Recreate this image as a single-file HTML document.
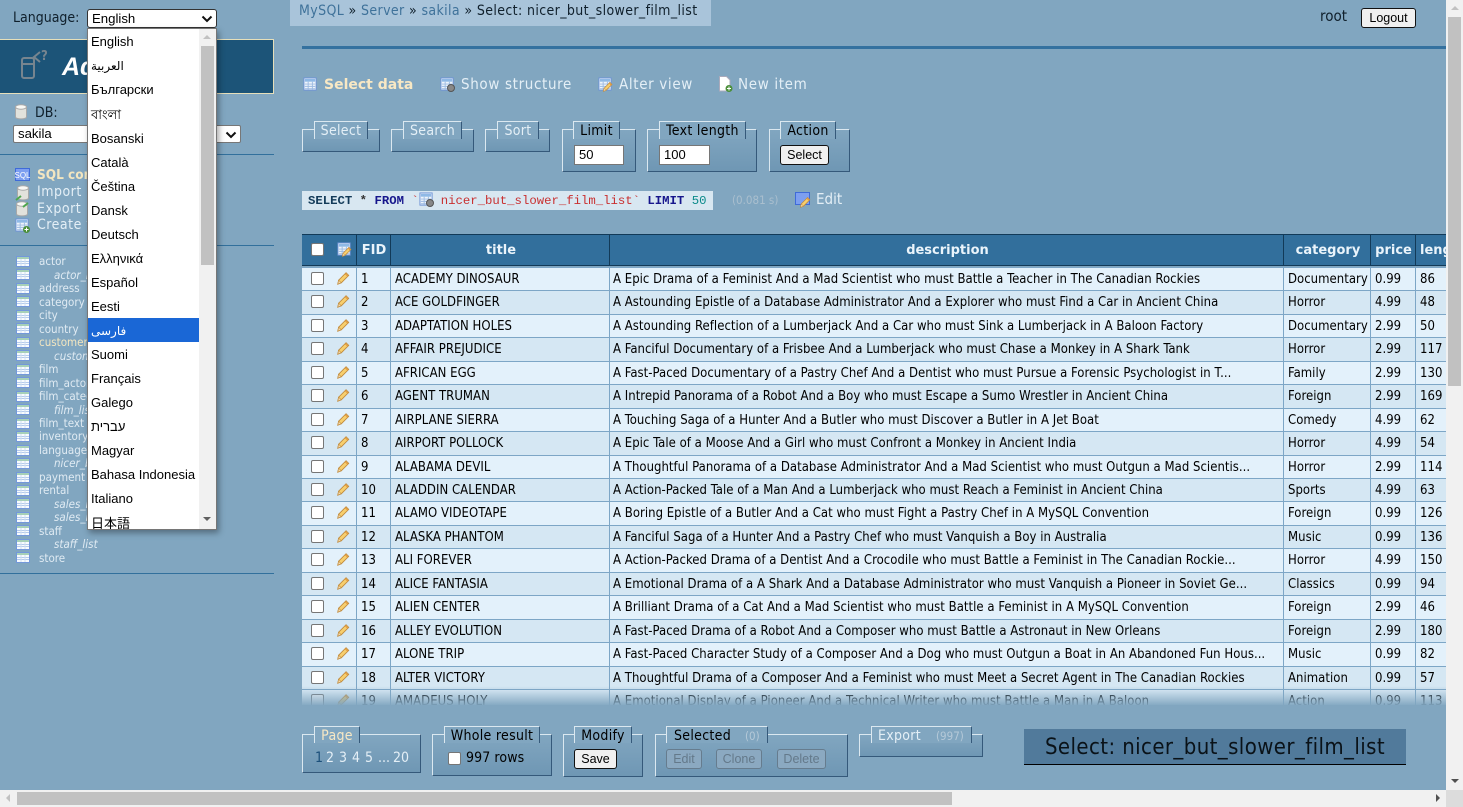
<!DOCTYPE html>
<html lang="en"><head><meta charset="utf-8"><title>Select: nicer_but_slower_film_list</title>
<style>
html,body{margin:0;padding:0;width:1463px;height:807px;overflow:hidden;background:#81a6c0;font-family:"DejaVu Sans Condensed","DejaVu Sans",sans-serif;font-stretch:condensed;font-size:13px;color:#000}
.a{position:absolute;white-space:nowrap}
.lt{color:#e4eff6}
.fs{position:absolute;box-sizing:border-box;border:1px solid;border-color:#dbe8f0 #35597a #35597a #dbe8f0;background:linear-gradient(#81a6c0,#6f97b4)}
.lg{position:absolute;box-sizing:border-box;border-top:1px solid #dbe8f0;border-left:1px solid #dbe8f0;border-right:1px solid #35597a;background:#81a6c0;text-align:center;font-size:14px;letter-spacing:.3px;line-height:19px;white-space:nowrap}
.inp{position:absolute;box-sizing:border-box;background:#fff;border:1px solid #767676;font-family:"Liberation Sans",sans-serif;font-stretch:normal;font-size:13px;line-height:18px;padding-left:4px;height:20px}
.btn{position:absolute;box-sizing:border-box;background:#f0f0f0;border:1px solid #111;border-radius:3px;text-align:center;font-family:"Liberation Sans",sans-serif;font-stretch:normal;font-size:12.5px;line-height:18px;height:20px}
.btn.dis{background:#8ba9c1;border-color:#667c8e;color:#64798a}
.cb{position:absolute;box-sizing:border-box;width:13px;height:13px;background:#fff;border:1px solid #767676;border-radius:2px}
.hr{position:absolute;left:0;width:274px;height:1px;background:#32709c}
.tb{position:absolute;left:16px;width:14px;height:11px}
.sn{position:absolute;left:39px;font-size:11.5px;line-height:13px;color:#e0ebf3;white-space:nowrap}
.sn.v{left:54px;font-style:italic}
.nv{font-size:15px;letter-spacing:.65px;line-height:18px}
.sd{left:37px;font-size:14px;letter-spacing:.5px;line-height:16px}
.pg{top:750px;font-size:14px;line-height:17px}
#tw{position:absolute;left:302px;top:234px;width:1144px;height:471px;overflow:hidden}
.th{position:absolute;top:0;left:0;width:1200px;height:32px;background:#326f9c;border-top:1px solid #123a58;border-bottom:1px solid #123a58;box-sizing:border-box}
.th b{position:absolute;top:0;height:30px;line-height:31px;text-align:center;color:#eaf4fb;font-family:"DejaVu Sans",sans-serif;font-stretch:normal;font-size:13px;box-sizing:border-box;border-left:1px solid #123a58;padding-left:2px;white-space:nowrap;overflow:hidden}
.r{position:absolute;left:0;width:1200px;height:25px;box-sizing:border-box;border-top:1px solid #7da6c6}
.o{background:#e3f1fb}.e{background:#d5e7f3}
.r i{position:absolute;top:-1px;bottom:0;width:1px;background:#7da6c6}
.r span{position:absolute;top:0;line-height:23px;white-space:nowrap;letter-spacing:.03px}
.r .cb{left:9px;top:4px}
.r svg{position:absolute;left:34px;top:3px}
.c0{left:59px}.c1{left:93px}.c2{left:311px}.c3{left:986px}.c4{left:1073px}.c5{left:1118px}
#fade{position:absolute;left:302px;top:686px;width:1144px;height:20px;background:linear-gradient(rgba(129,166,192,0),#81a6c0)}
#dd{position:absolute;left:87px;top:28px;width:130px;height:502px;box-sizing:border-box;background:#fff;border:1px solid #767676;box-shadow:2px 3px 6px rgba(0,0,0,.35);overflow:hidden;font-family:"Liberation Sans","DejaVu Sans",sans-serif;font-stretch:normal}
#dd div{position:absolute;left:0;width:112px;height:24px;line-height:26px;padding-left:3px;box-sizing:border-box;font-size:13px;white-space:nowrap}
#dd .sb{position:absolute;left:111px;top:0;width:17px;height:500px;background:#f1f1f1;padding:0}
.arr{position:absolute;width:0;height:0;border-left:4px solid transparent;border-right:4px solid transparent}
</style></head><body>
<svg width="0" height="0" style="position:absolute"><defs>
<symbol id="tbl" viewBox="0 0 14 11"><rect x=".5" y=".5" width="13" height="10" fill="#f8fbfe" stroke="#7398da"/><rect x="1" y="1" width="12" height="2" fill="#a6d0b8"/><path d="M1 5.500h12M1 7.500h12" stroke="#b5cbec" stroke-width="1"/><path d="M5 3v7M9 3v7" stroke="#cfdff2" stroke-width="1"/></symbol>
<symbol id="pen" viewBox="0 0 16 16"><path d="M3 10.500 11.500 2l3 3L6 13.500 2 15z" fill="#f7cf6e" stroke="#c08a3c"/><path d="M3 10.500 6 13.500 2 15z" fill="#f3d9ad" stroke="#c08a3c" stroke-width=".7"/><path d="M10.500 3l3 3" stroke="#e2973f" stroke-width="1.400"/></symbol>
<symbol id="db" viewBox="0 0 14 16"><path d="M1.500 3v10c0 2.500 11 2.500 11 0V3z" fill="#e2e2dc" stroke="#a8a8a8"/><ellipse cx="7" cy="3" rx="5.500" ry="2.200" fill="#f8f8f4" stroke="#a8a8a8"/></symbol>
<symbol id="doc" viewBox="0 0 16 16"><rect x="1" y="1" width="13" height="13" fill="#eef4fb" stroke="#6e93d6"/><rect x="2" y="2" width="11" height="3" fill="#8fb9e6"/><path d="M2 7.500h11M2 10h11M2 12.500h11M5.500 5v8.500M10 5v8.500" stroke="#9dbbe2"/></symbol>
</defs></svg>

<!-- sidebar -->
<div class="a" style="left:13px;top:10px;font-size:14px;line-height:17px;color:#10202c">Language:</div>
<div class="a" style="left:87px;top:9px;width:130px;height:19px;box-sizing:border-box;background:#fff;border:1px solid #333;border-radius:3px;font-family:'Liberation Sans',sans-serif;font-stretch:normal;font-size:13.200px;line-height:18px;padding-left:4px">English<svg style="position:absolute;left:113px;top:5px" width="12" height="8"><path d="M1.500 1.500 6 6l4.500-4.500" fill="none" stroke="#111" stroke-width="2"/></svg></div>

<div class="a" style="left:-1px;top:39px;width:275px;height:55px;box-sizing:border-box;background:#1c5478;border:1px solid #e6dfba"></div>
<svg class="a" style="left:18px;top:46px" width="34" height="36" fill="none"><rect x="4" y="12" width="12" height="20" rx="2" stroke="#77858f" stroke-width="2"/><path d="M4 18h12" stroke="#77858f" stroke-width="2"/><path d="M22 6l-6 5 6 5" stroke="#77858f" stroke-width="2"/></svg>
<div class="a" style="left:41px;top:49px;font-size:13px;font-weight:bold;color:#77858f">?</div>
<div class="a" style="left:62px;top:52px;font-family:'Liberation Sans',sans-serif;font-stretch:normal;font-size:25px;line-height:30px;font-style:italic;font-weight:bold;color:#fff">Adminer</div>

<svg class="a" style="left:14px;top:104px" width="14" height="16"><use href="#db"/></svg>
<div class="a" style="left:35px;top:105px;font-size:14px;line-height:17px;color:#10202c">DB:</div>
<div class="a" style="left:13px;top:125px;width:228px;height:18px;box-sizing:border-box;background:#fff;border:1px solid #777;border-radius:2px;font-family:'Liberation Sans',sans-serif;font-stretch:normal;font-size:13.200px;line-height:16px;padding-left:4px">sakila<svg style="position:absolute;left:211px;top:5px" width="12" height="8"><path d="M1.500 1.500 6 6l4.500-4.500" fill="none" stroke="#111" stroke-width="2"/></svg></div>
<div class="hr" style="top:154px"></div>

<svg class="a" style="left:15px;top:168px" width="15" height="13"><rect x=".5" y=".5" width="14" height="12" fill="#7d9ff0" stroke="#3f6bd8"/><text x="7.500" y="10" font-size="8" text-anchor="middle" fill="#fff" font-family="Liberation Sans">SQL</text></svg>
<svg class="a" style="left:15px;top:185px" width="15" height="16"><use href="#db" x="1" width="14" height="16"/><path d="M1 15l5-4" stroke="#4ea74e" stroke-width="2"/></svg>
<svg class="a" style="left:15px;top:201px" width="15" height="16"><use href="#db" width="14" height="16"/><path d="M8 6l5-4" stroke="#4ea74e" stroke-width="2"/></svg>
<svg class="a" style="left:15px;top:218px" width="15" height="15"><use href="#doc"/><circle cx="11.500" cy="11.500" r="3.500" fill="#4b8f3a"/><path d="M9.500 11.500h4M11.500 9.500v4" stroke="#fff"/></svg>
<div class="a" style="left:37px;top:167px;font-size:13.500px;line-height:16px;font-weight:bold;color:#f3e6c0">SQL command</div>
<div class="a lt sd" style="top:184px">Import</div>
<div class="a lt sd" style="top:201px">Export</div>
<div class="a lt sd" style="top:217px">Create table</div>
<div class="hr" style="top:245px"></div>

<svg class="tb" style="top:256px"><use href="#tbl"/></svg><div class="sn" style="top:255px">actor</div>
<svg class="tb" style="top:269px"><use href="#tbl"/></svg><div class="sn v" style="top:269px">actor_info</div>
<svg class="tb" style="top:283px"><use href="#tbl"/></svg><div class="sn" style="top:282px">address</div>
<svg class="tb" style="top:296px"><use href="#tbl"/></svg><div class="sn" style="top:296px">category</div>
<svg class="tb" style="top:310px"><use href="#tbl"/></svg><div class="sn" style="top:309px">city</div>
<svg class="tb" style="top:323px"><use href="#tbl"/></svg><div class="sn" style="top:323px">country</div>
<svg class="tb" style="top:337px"><use href="#tbl"/></svg><div class="sn" style="top:336px;color:#f3e6c0">customer</div>
<svg class="tb" style="top:350px"><use href="#tbl"/></svg><div class="sn v" style="top:350px">customer_list</div>
<svg class="tb" style="top:364px"><use href="#tbl"/></svg><div class="sn" style="top:363px">film</div>
<svg class="tb" style="top:377px"><use href="#tbl"/></svg><div class="sn" style="top:377px">film_actor</div>
<svg class="tb" style="top:391px"><use href="#tbl"/></svg><div class="sn" style="top:390px">film_category</div>
<svg class="tb" style="top:404px"><use href="#tbl"/></svg><div class="sn v" style="top:404px">film_list</div>
<svg class="tb" style="top:418px"><use href="#tbl"/></svg><div class="sn" style="top:417px">film_text</div>
<svg class="tb" style="top:431px"><use href="#tbl"/></svg><div class="sn" style="top:430px">inventory</div>
<svg class="tb" style="top:445px"><use href="#tbl"/></svg><div class="sn" style="top:444px">language</div>
<svg class="tb" style="top:458px"><use href="#tbl"/></svg><div class="sn v" style="top:457px">nicer_but_slower_film_list</div>
<svg class="tb" style="top:472px"><use href="#tbl"/></svg><div class="sn" style="top:471px">payment</div>
<svg class="tb" style="top:485px"><use href="#tbl"/></svg><div class="sn" style="top:484px">rental</div>
<svg class="tb" style="top:498px"><use href="#tbl"/></svg><div class="sn v" style="top:498px">sales_by_film_category</div>
<svg class="tb" style="top:512px"><use href="#tbl"/></svg><div class="sn v" style="top:511px">sales_by_store</div>
<svg class="tb" style="top:525px"><use href="#tbl"/></svg><div class="sn" style="top:525px">staff</div>
<svg class="tb" style="top:539px"><use href="#tbl"/></svg><div class="sn v" style="top:538px">staff_list</div>
<svg class="tb" style="top:552px"><use href="#tbl"/></svg><div class="sn" style="top:552px">store</div>
<div class="hr" style="top:573px"></div>

<!-- top -->
<div class="a" style="left:290px;top:0;width:421px;height:26px;background:#a9c4da"></div>
<div class="a" style="left:299px;top:3px;font-size:14px;letter-spacing:.38px;line-height:17px;color:#10202c"><span style="color:#3f729a">MySQL</span> » <span style="color:#3f729a">Server</span> » <span style="color:#3f729a">sakila</span> » Select: nicer_but_slower_film_list</div>
<div class="a" style="left:1320px;top:7px;font-size:15px;line-height:18px;color:#10202c">root</div>
<div class="btn" style="left:1361px;top:8px;width:55px">Logout</div>
<div class="a" style="left:302px;top:46px;width:1144px;height:3px;background:#34719f"></div>

<svg class="a" style="left:303px;top:77px" width="15" height="15"><use href="#doc"/></svg>
<div class="a" style="left:324px;top:76px;font-size:14px;line-height:18px;font-family:'DejaVu Sans',sans-serif;font-stretch:normal;font-weight:bold;color:#f8e8c4">Select data</div>
<svg class="a" style="left:440px;top:77px" width="15" height="15"><use href="#doc"/><circle cx="11" cy="11" r="3.500" fill="#888" stroke="#555"/></svg>
<div class="a lt nv" style="left:461px;top:75px">Show structure</div>
<svg class="a" style="left:598px;top:77px" width="15" height="15"><use href="#doc"/><use href="#pen" x="4" y="4" width="11" height="11"/></svg>
<div class="a lt nv" style="left:619px;top:75px">Alter view</div>
<svg class="a" style="left:717px;top:76px" width="16" height="16"><path d="M2.500.5h7l3.500 3.500v11h-10.500z" fill="#fff" stroke="#aab"/><circle cx="12" cy="12.500" r="3.500" fill="#4b8f3a"/><path d="M10 12.500h4M12 10.500v4" stroke="#fff"/></svg>
<div class="a lt nv" style="left:738px;top:75px">New item</div>

<!-- filter fieldsets -->
<div class="fs" style="left:302px;top:129px;width:78px;height:23px"></div>
<div class="lg lt" style="left:314px;top:121px;width:54px;height:18px">Select</div>
<div class="fs" style="left:391px;top:129px;width:83px;height:23px"></div>
<div class="lg lt" style="left:403px;top:121px;width:59px;height:18px">Search</div>
<div class="fs" style="left:485px;top:129px;width:65px;height:23px"></div>
<div class="lg lt" style="left:497px;top:121px;width:42px;height:18px">Sort</div>
<div class="fs" style="left:562px;top:129px;width:74px;height:43px"></div>
<div class="lg" style="left:573px;top:121px;width:47px;height:18px">Limit</div>
<div class="inp" style="left:574px;top:145px;width:50px">50</div>
<div class="fs" style="left:647px;top:129px;width:110px;height:43px"></div>
<div class="lg" style="left:659px;top:121px;width:87px;height:18px">Text length</div>
<div class="inp" style="left:659px;top:145px;width:51px">100</div>
<div class="fs" style="left:769px;top:129px;width:81px;height:43px"></div>
<div class="lg" style="left:780px;top:121px;width:56px;height:18px">Action</div>
<div class="btn" style="left:780px;top:145px;width:49px">Select</div>

<!-- sql -->
<div class="a" style="left:302px;top:191px;width:411px;height:19px;background:#d8e7f1"></div>
<div class="a" style="left:308px;top:193.500px;font-family:'Liberation Mono',monospace;font-stretch:normal;font-size:12.300px;line-height:15px;color:#123a58;font-weight:bold"><span style="color:#123a58">SELECT</span> <span style="color:#333">*</span> <span style="color:#16168c">FROM</span> <span style="color:#c33;font-weight:normal">`</span><span style="display:inline-block;width:22px"></span><span style="color:#c92f2f;font-weight:normal">nicer_but_slower_film_list`</span> <span style="color:#16168c">LIMIT</span> <span style="color:#0a8a8a;font-weight:normal">50</span></div>
<svg class="a" style="left:419px;top:192px" width="15" height="15"><use href="#doc"/><circle cx="11" cy="11" r="3.500" fill="#888" stroke="#555"/></svg>
<div class="a" style="left:732px;top:193px;font-size:11.500px;line-height:15px;color:#aabfce">(0.081 s)</div>
<svg class="a" style="left:795px;top:192px" width="16" height="16"><rect x=".5" y=".5" width="14" height="12" fill="#7d9ff0" stroke="#3f6bd8"/><use href="#pen" x="4" y="4" width="12" height="12"/></svg>
<div class="a lt" style="left:816px;top:191px;font-size:15px;line-height:17px">Edit</div>

<!-- table -->
<div id="tw">
<div class="th">
<b style="left:54px;width:34px;padding-left:1px">FID</b><b style="left:88px;width:219px">title</b><b style="left:307px;width:674px">description</b><b style="left:981px;width:87px">category</b><b style="left:1068px;width:45px;padding-left:1px">price</b><b style="left:1113px;width:60px;text-align:left;padding-left:4px">length</b>
<div class="cb" style="left:9px;top:8px"></div>
<svg style="position:absolute;left:35px;top:7px" width="15" height="15"><use href="#doc"/><use href="#pen" x="4" y="4" width="11" height="11"/></svg>
</div>
<div class="r o" style="top:33px"><i style="left:54px"></i><i style="left:88px"></i><i style="left:307px"></i><i style="left:981px"></i><i style="left:1068px"></i><i style="left:1113px"></i><div class="cb"></div><svg width="14" height="14"><use href="#pen"/></svg><span class="c0">1</span><span class="c1">ACADEMY DINOSAUR</span><span class="c2">A Epic Drama of a Feminist And a Mad Scientist who must Battle a Teacher in The Canadian Rockies</span><span class="c3">Documentary</span><span class="c4">0.99</span><span class="c5">86</span></div>
<div class="r e" style="top:56px"><i style="left:54px"></i><i style="left:88px"></i><i style="left:307px"></i><i style="left:981px"></i><i style="left:1068px"></i><i style="left:1113px"></i><div class="cb"></div><svg width="14" height="14"><use href="#pen"/></svg><span class="c0">2</span><span class="c1">ACE GOLDFINGER</span><span class="c2">A Astounding Epistle of a Database Administrator And a Explorer who must Find a Car in Ancient China</span><span class="c3">Horror</span><span class="c4">4.99</span><span class="c5">48</span></div>
<div class="r o" style="top:80px"><i style="left:54px"></i><i style="left:88px"></i><i style="left:307px"></i><i style="left:981px"></i><i style="left:1068px"></i><i style="left:1113px"></i><div class="cb"></div><svg width="14" height="14"><use href="#pen"/></svg><span class="c0">3</span><span class="c1">ADAPTATION HOLES</span><span class="c2">A Astounding Reflection of a Lumberjack And a Car who must Sink a Lumberjack in A Baloon Factory</span><span class="c3">Documentary</span><span class="c4">2.99</span><span class="c5">50</span></div>
<div class="r e" style="top:103px"><i style="left:54px"></i><i style="left:88px"></i><i style="left:307px"></i><i style="left:981px"></i><i style="left:1068px"></i><i style="left:1113px"></i><div class="cb"></div><svg width="14" height="14"><use href="#pen"/></svg><span class="c0">4</span><span class="c1">AFFAIR PREJUDICE</span><span class="c2">A Fanciful Documentary of a Frisbee And a Lumberjack who must Chase a Monkey in A Shark Tank</span><span class="c3">Horror</span><span class="c4">2.99</span><span class="c5">117</span></div>
<div class="r o" style="top:127px"><i style="left:54px"></i><i style="left:88px"></i><i style="left:307px"></i><i style="left:981px"></i><i style="left:1068px"></i><i style="left:1113px"></i><div class="cb"></div><svg width="14" height="14"><use href="#pen"/></svg><span class="c0">5</span><span class="c1">AFRICAN EGG</span><span class="c2">A Fast-Paced Documentary of a Pastry Chef And a Dentist who must Pursue a Forensic Psychologist in T...</span><span class="c3">Family</span><span class="c4">2.99</span><span class="c5">130</span></div>
<div class="r e" style="top:150px"><i style="left:54px"></i><i style="left:88px"></i><i style="left:307px"></i><i style="left:981px"></i><i style="left:1068px"></i><i style="left:1113px"></i><div class="cb"></div><svg width="14" height="14"><use href="#pen"/></svg><span class="c0">6</span><span class="c1">AGENT TRUMAN</span><span class="c2">A Intrepid Panorama of a Robot And a Boy who must Escape a Sumo Wrestler in Ancient China</span><span class="c3">Foreign</span><span class="c4">2.99</span><span class="c5">169</span></div>
<div class="r o" style="top:174px"><i style="left:54px"></i><i style="left:88px"></i><i style="left:307px"></i><i style="left:981px"></i><i style="left:1068px"></i><i style="left:1113px"></i><div class="cb"></div><svg width="14" height="14"><use href="#pen"/></svg><span class="c0">7</span><span class="c1">AIRPLANE SIERRA</span><span class="c2">A Touching Saga of a Hunter And a Butler who must Discover a Butler in A Jet Boat</span><span class="c3">Comedy</span><span class="c4">4.99</span><span class="c5">62</span></div>
<div class="r e" style="top:197px"><i style="left:54px"></i><i style="left:88px"></i><i style="left:307px"></i><i style="left:981px"></i><i style="left:1068px"></i><i style="left:1113px"></i><div class="cb"></div><svg width="14" height="14"><use href="#pen"/></svg><span class="c0">8</span><span class="c1">AIRPORT POLLOCK</span><span class="c2">A Epic Tale of a Moose And a Girl who must Confront a Monkey in Ancient India</span><span class="c3">Horror</span><span class="c4">4.99</span><span class="c5">54</span></div>
<div class="r o" style="top:221px"><i style="left:54px"></i><i style="left:88px"></i><i style="left:307px"></i><i style="left:981px"></i><i style="left:1068px"></i><i style="left:1113px"></i><div class="cb"></div><svg width="14" height="14"><use href="#pen"/></svg><span class="c0">9</span><span class="c1">ALABAMA DEVIL</span><span class="c2">A Thoughtful Panorama of a Database Administrator And a Mad Scientist who must Outgun a Mad Scientis...</span><span class="c3">Horror</span><span class="c4">2.99</span><span class="c5">114</span></div>
<div class="r e" style="top:244px"><i style="left:54px"></i><i style="left:88px"></i><i style="left:307px"></i><i style="left:981px"></i><i style="left:1068px"></i><i style="left:1113px"></i><div class="cb"></div><svg width="14" height="14"><use href="#pen"/></svg><span class="c0">10</span><span class="c1">ALADDIN CALENDAR</span><span class="c2">A Action-Packed Tale of a Man And a Lumberjack who must Reach a Feminist in Ancient China</span><span class="c3">Sports</span><span class="c4">4.99</span><span class="c5">63</span></div>
<div class="r o" style="top:267px"><i style="left:54px"></i><i style="left:88px"></i><i style="left:307px"></i><i style="left:981px"></i><i style="left:1068px"></i><i style="left:1113px"></i><div class="cb"></div><svg width="14" height="14"><use href="#pen"/></svg><span class="c0">11</span><span class="c1">ALAMO VIDEOTAPE</span><span class="c2">A Boring Epistle of a Butler And a Cat who must Fight a Pastry Chef in A MySQL Convention</span><span class="c3">Foreign</span><span class="c4">0.99</span><span class="c5">126</span></div>
<div class="r e" style="top:291px"><i style="left:54px"></i><i style="left:88px"></i><i style="left:307px"></i><i style="left:981px"></i><i style="left:1068px"></i><i style="left:1113px"></i><div class="cb"></div><svg width="14" height="14"><use href="#pen"/></svg><span class="c0">12</span><span class="c1">ALASKA PHANTOM</span><span class="c2">A Fanciful Saga of a Hunter And a Pastry Chef who must Vanquish a Boy in Australia</span><span class="c3">Music</span><span class="c4">0.99</span><span class="c5">136</span></div>
<div class="r o" style="top:314px"><i style="left:54px"></i><i style="left:88px"></i><i style="left:307px"></i><i style="left:981px"></i><i style="left:1068px"></i><i style="left:1113px"></i><div class="cb"></div><svg width="14" height="14"><use href="#pen"/></svg><span class="c0">13</span><span class="c1">ALI FOREVER</span><span class="c2">A Action-Packed Drama of a Dentist And a Crocodile who must Battle a Feminist in The Canadian Rockie...</span><span class="c3">Horror</span><span class="c4">4.99</span><span class="c5">150</span></div>
<div class="r e" style="top:338px"><i style="left:54px"></i><i style="left:88px"></i><i style="left:307px"></i><i style="left:981px"></i><i style="left:1068px"></i><i style="left:1113px"></i><div class="cb"></div><svg width="14" height="14"><use href="#pen"/></svg><span class="c0">14</span><span class="c1">ALICE FANTASIA</span><span class="c2">A Emotional Drama of a A Shark And a Database Administrator who must Vanquish a Pioneer in Soviet Ge...</span><span class="c3">Classics</span><span class="c4">0.99</span><span class="c5">94</span></div>
<div class="r o" style="top:361px"><i style="left:54px"></i><i style="left:88px"></i><i style="left:307px"></i><i style="left:981px"></i><i style="left:1068px"></i><i style="left:1113px"></i><div class="cb"></div><svg width="14" height="14"><use href="#pen"/></svg><span class="c0">15</span><span class="c1">ALIEN CENTER</span><span class="c2">A Brilliant Drama of a Cat And a Mad Scientist who must Battle a Feminist in A MySQL Convention</span><span class="c3">Foreign</span><span class="c4">2.99</span><span class="c5">46</span></div>
<div class="r e" style="top:385px"><i style="left:54px"></i><i style="left:88px"></i><i style="left:307px"></i><i style="left:981px"></i><i style="left:1068px"></i><i style="left:1113px"></i><div class="cb"></div><svg width="14" height="14"><use href="#pen"/></svg><span class="c0">16</span><span class="c1">ALLEY EVOLUTION</span><span class="c2">A Fast-Paced Drama of a Robot And a Composer who must Battle a Astronaut in New Orleans</span><span class="c3">Foreign</span><span class="c4">2.99</span><span class="c5">180</span></div>
<div class="r o" style="top:408px"><i style="left:54px"></i><i style="left:88px"></i><i style="left:307px"></i><i style="left:981px"></i><i style="left:1068px"></i><i style="left:1113px"></i><div class="cb"></div><svg width="14" height="14"><use href="#pen"/></svg><span class="c0">17</span><span class="c1">ALONE TRIP</span><span class="c2">A Fast-Paced Character Study of a Composer And a Dog who must Outgun a Boat in An Abandoned Fun Hous...</span><span class="c3">Music</span><span class="c4">0.99</span><span class="c5">82</span></div>
<div class="r e" style="top:432px"><i style="left:54px"></i><i style="left:88px"></i><i style="left:307px"></i><i style="left:981px"></i><i style="left:1068px"></i><i style="left:1113px"></i><div class="cb"></div><svg width="14" height="14"><use href="#pen"/></svg><span class="c0">18</span><span class="c1">ALTER VICTORY</span><span class="c2">A Thoughtful Drama of a Composer And a Feminist who must Meet a Secret Agent in The Canadian Rockies</span><span class="c3">Animation</span><span class="c4">0.99</span><span class="c5">57</span></div>
<div class="r o" style="top:455px"><i style="left:54px"></i><i style="left:88px"></i><i style="left:307px"></i><i style="left:981px"></i><i style="left:1068px"></i><i style="left:1113px"></i><div class="cb"></div><svg width="14" height="14"><use href="#pen"/></svg><span class="c0">19</span><span class="c1">AMADEUS HOLY</span><span class="c2">A Emotional Display of a Pioneer And a Technical Writer who must Battle a Man in A Baloon</span><span class="c3">Action</span><span class="c4">0.99</span><span class="c5">113</span></div>
</div>
<div id="fade"></div>

<!-- bottom -->
<div class="fs" style="left:302px;top:734px;width:119px;height:39px"></div>
<div class="lg" style="left:314px;top:726px;width:46px;height:17px;color:#f8e8c4">Page</div>
<div class="a pg" style="left:315px;color:#1b4f7a">1</div>
<div class="a lt pg" style="left:326px">2</div>
<div class="a lt pg" style="left:339px">3</div>
<div class="a lt pg" style="left:352px">4</div>
<div class="a lt pg" style="left:365px">5</div>
<div class="a lt pg" style="left:378px">...</div>
<div class="a lt pg" style="left:393px">20</div>
<div class="fs" style="left:432px;top:734px;width:120px;height:42px"></div>
<div class="lg" style="left:444px;top:726px;width:96px;height:17px">Whole result</div>
<div class="cb" style="left:448px;top:752px"></div>
<div class="a" style="left:466px;top:750px;font-size:14px;letter-spacing:.1px;line-height:17px">997 rows</div>
<div class="fs" style="left:563px;top:734px;width:80px;height:43px"></div>
<div class="lg" style="left:574px;top:726px;width:58px;height:17px">Modify</div>
<div class="btn" style="left:574px;top:749px;width:43px">Save</div>
<div class="fs" style="left:655px;top:734px;width:193px;height:43px"></div>
<div class="lg" style="left:666px;top:726px;width:102px;height:17px;text-align:left;padding-left:7px">Selected</div>
<div class="a" style="left:745px;top:729px;font-size:11.500px;line-height:15px;color:#b5c9d8">(0)</div>
<div class="btn dis" style="left:666px;top:749px;width:36px">Edit</div>
<div class="btn dis" style="left:716px;top:749px;width:46px">Clone</div>
<div class="btn dis" style="left:777px;top:749px;width:49px">Delete</div>
<div class="fs" style="left:859px;top:734px;width:124px;height:23px"></div>
<div class="lg lt" style="left:871px;top:726px;width:101px;height:17px;text-align:left;padding-left:6px">Export</div>
<div class="a" style="left:936px;top:729px;font-size:11.500px;line-height:15px;color:#b5c9d8">(997)</div>
<div class="a" style="left:1024px;top:729px;width:382px;height:36px;box-sizing:border-box;background:#517a9b;border-bottom:1px solid #000;text-align:center;font-size:22px;letter-spacing:.4px;line-height:37px;color:#0a1218">Select: nicer_but_slower_film_list</div>

<!-- dropdown -->
<div id="dd">
<div style="top:0">English</div>
<div style="top:24px;direction:ltr;font-size:12px">العربية</div>
<div style="top:48px">Български</div>
<div style="top:73px">বাংলা</div>
<div style="top:97px">Bosanski</div>
<div style="top:121px">Català</div>
<div style="top:145px">Čeština</div>
<div style="top:169px">Dansk</div>
<div style="top:193px">Deutsch</div>
<div style="top:217px">Ελληνικά</div>
<div style="top:241px">Español</div>
<div style="top:265px">Eesti</div>
<div style="top:289px;background:#1a67d6;color:#fff;font-size:12px">فارسی</div>
<div style="top:313px">Suomi</div>
<div style="top:337px">Français</div>
<div style="top:361px">Galego</div>
<div style="top:385px">עברית</div>
<div style="top:409px">Magyar</div>
<div style="top:433px">Bahasa Indonesia</div>
<div style="top:457px">Italiano</div>
<div style="top:481px;font-family:'Noto Sans CJK JP',sans-serif">日本語</div>
<div class="sb"></div>
<div style="left:113px;top:17px;width:13px;height:219px;background:#c1c1c1;padding:0"></div>
<span class="arr" style="left:115px;top:6px;border-bottom:4px solid #c1c1c1"></span>
<span class="arr" style="left:115px;top:488px;border-top:4px solid #606060"></span>
</div>

<!-- page scrollbars -->
<div class="a" style="left:1446px;top:0;width:17px;height:790px;background:#f1f1f1"></div>
<div class="a" style="left:1448px;top:17px;width:13px;height:369px;background:#c1c1c1"></div>
<span class="arr" style="left:1451px;top:6px;border-bottom:4px solid #c1c1c1"></span>
<span class="arr" style="left:1451px;top:779px;border-top:4px solid #505050"></span>
<div class="a" style="left:0;top:790px;width:1446px;height:17px;background:#f1f1f1"></div>
<div class="a" style="left:17px;top:792px;width:935px;height:13px;background:#c1c1c1"></div>
<span class="arr" style="left:6px;top:794px;border:4px solid transparent;border-right:4px solid #c1c1c1;border-left:0"></span>
<span class="arr" style="left:1436px;top:794px;border:4px solid transparent;border-left:4px solid #505050;border-right:0"></span>
<div class="a" style="left:1446px;top:790px;width:17px;height:17px;background:#dcdcdc"></div>
</body></html>
